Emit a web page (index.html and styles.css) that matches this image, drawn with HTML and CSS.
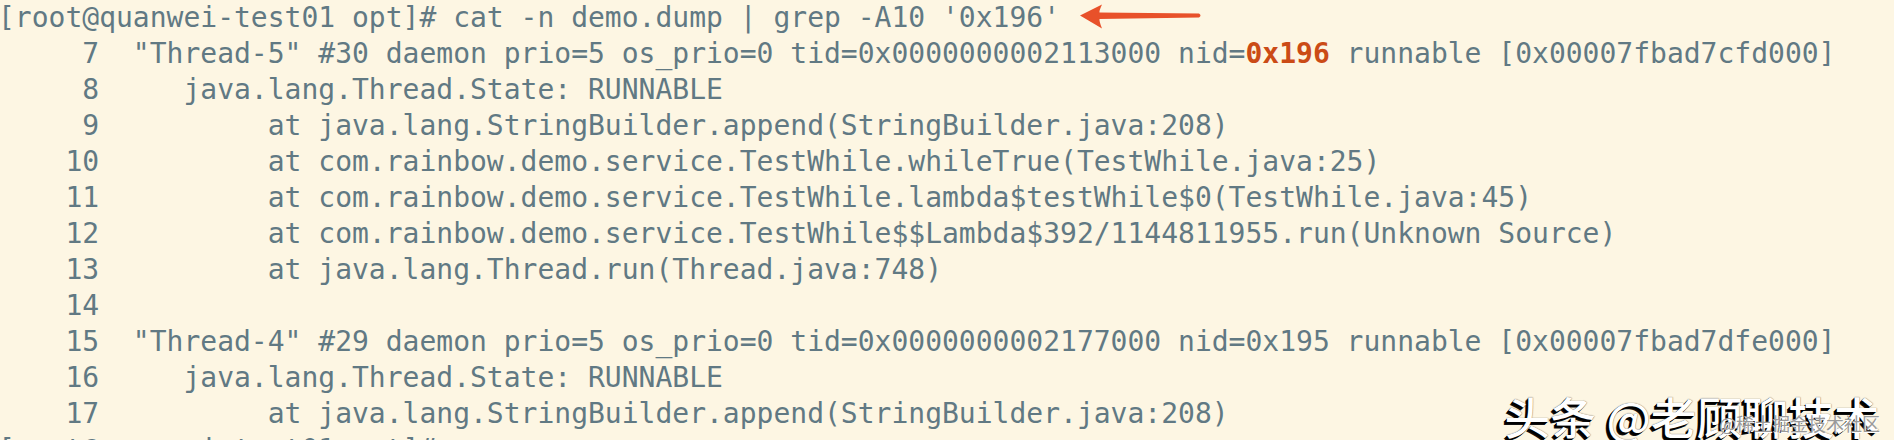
FILE: index.html
```html
<!DOCTYPE html>
<html lang="zh">
<head>
<meta charset="utf-8">
<title>demo.dump</title>
<link rel="stylesheet" href="styles.css">
</head>
<body>
<div class="term">
<pre class="out"><div class="ln">[root@quanwei-test01 opt]# cat -n demo.dump | grep -A10 '0x196'</div><div class="ln">     7  "Thread-5" #30 daemon prio=5 os_prio=0 tid=0x0000000002113000 nid=<b class="hit">0x196</b> runnable [0x00007fbad7cfd000]</div><div class="ln">     8     java.lang.Thread.State: RUNNABLE</div><div class="ln">     9          at java.lang.StringBuilder.append(StringBuilder.java:208)</div><div class="ln">    10          at com.rainbow.demo.service.TestWhile.whileTrue(TestWhile.java:25)</div><div class="ln">    11          at com.rainbow.demo.service.TestWhile.lambda$testWhile$0(TestWhile.java:45)</div><div class="ln">    12          at com.rainbow.demo.service.TestWhile$$Lambda$392/1144811955.run(Unknown Source)</div><div class="ln">    13          at java.lang.Thread.run(Thread.java:748)</div><div class="ln">    14</div><div class="ln">    15  "Thread-4" #29 daemon prio=5 os_prio=0 tid=0x0000000002177000 nid=0x195 runnable [0x00007fbad7dfe000]</div><div class="ln">    16     java.lang.Thread.State: RUNNABLE</div><div class="ln">    17          at java.lang.StringBuilder.append(StringBuilder.java:208)</div><div class="ln">[root@quanwei-test01 opt]# </div></pre>
<svg class="arrow" width="126" height="30" viewBox="0 0 126 30" aria-hidden="true">
<path d="M2 13.5 L24 2.5 Q21 9 21.5 10.5 L121 11.5 Q124 13.5 121 15.5 L21.5 17 Q21 19 24 26.5 Z" fill="#e8512a"/>
</svg>
<div class="mark"><span class="mark-main">头条 @老顾聊技术</span><span class="mark-sub">@稀土掘金技术社区</span></div>
</div>
</body>
</html>
```

FILE: styles.css
```css
html, body {
  margin: 0;
  padding: 0;
  background: #fdf6e3;
}
.term {
  position: relative;
  width: 1894px;
  height: 440px;
  overflow: hidden;
  background: #fdf6e3;
}
.out {
  margin: 0 0 0 -2px;
  padding: 0;
  font-family: "DejaVu Sans Mono", monospace;
  font-size: 28px;
  line-height: 36px;
  color: #617983;
  white-space: pre;
}
.ln {
  height: 36px;
}
.hit {
  color: #cb4b16;
  font-weight: bold;
}
.arrow {
  position: absolute;
  left: 1078px;
  top: 2px;
}
.mark {
  position: absolute;
  right: 14px;
  bottom: 1px;
  font-family: "Noto Sans CJK SC", sans-serif;
}
.mark-main {
  display: block;
  font-size: 44px;
  font-weight: 500;
  line-height: 46px;
  color: #ffffff;
  letter-spacing: 0;
  text-shadow: -1px 1px 0 #000, -2px 2px 0 #000, -3px 3px 0 #111, 0 0 1px #333;
  transform: scaleX(1.04);
  transform-origin: right center;
}
.mark-sub {
  position: absolute;
  right: 0;
  bottom: 3px;
  font-size: 18px;
  color: #9a9a9a;
  text-shadow: 1px 1px 0 #fff;
}
```
